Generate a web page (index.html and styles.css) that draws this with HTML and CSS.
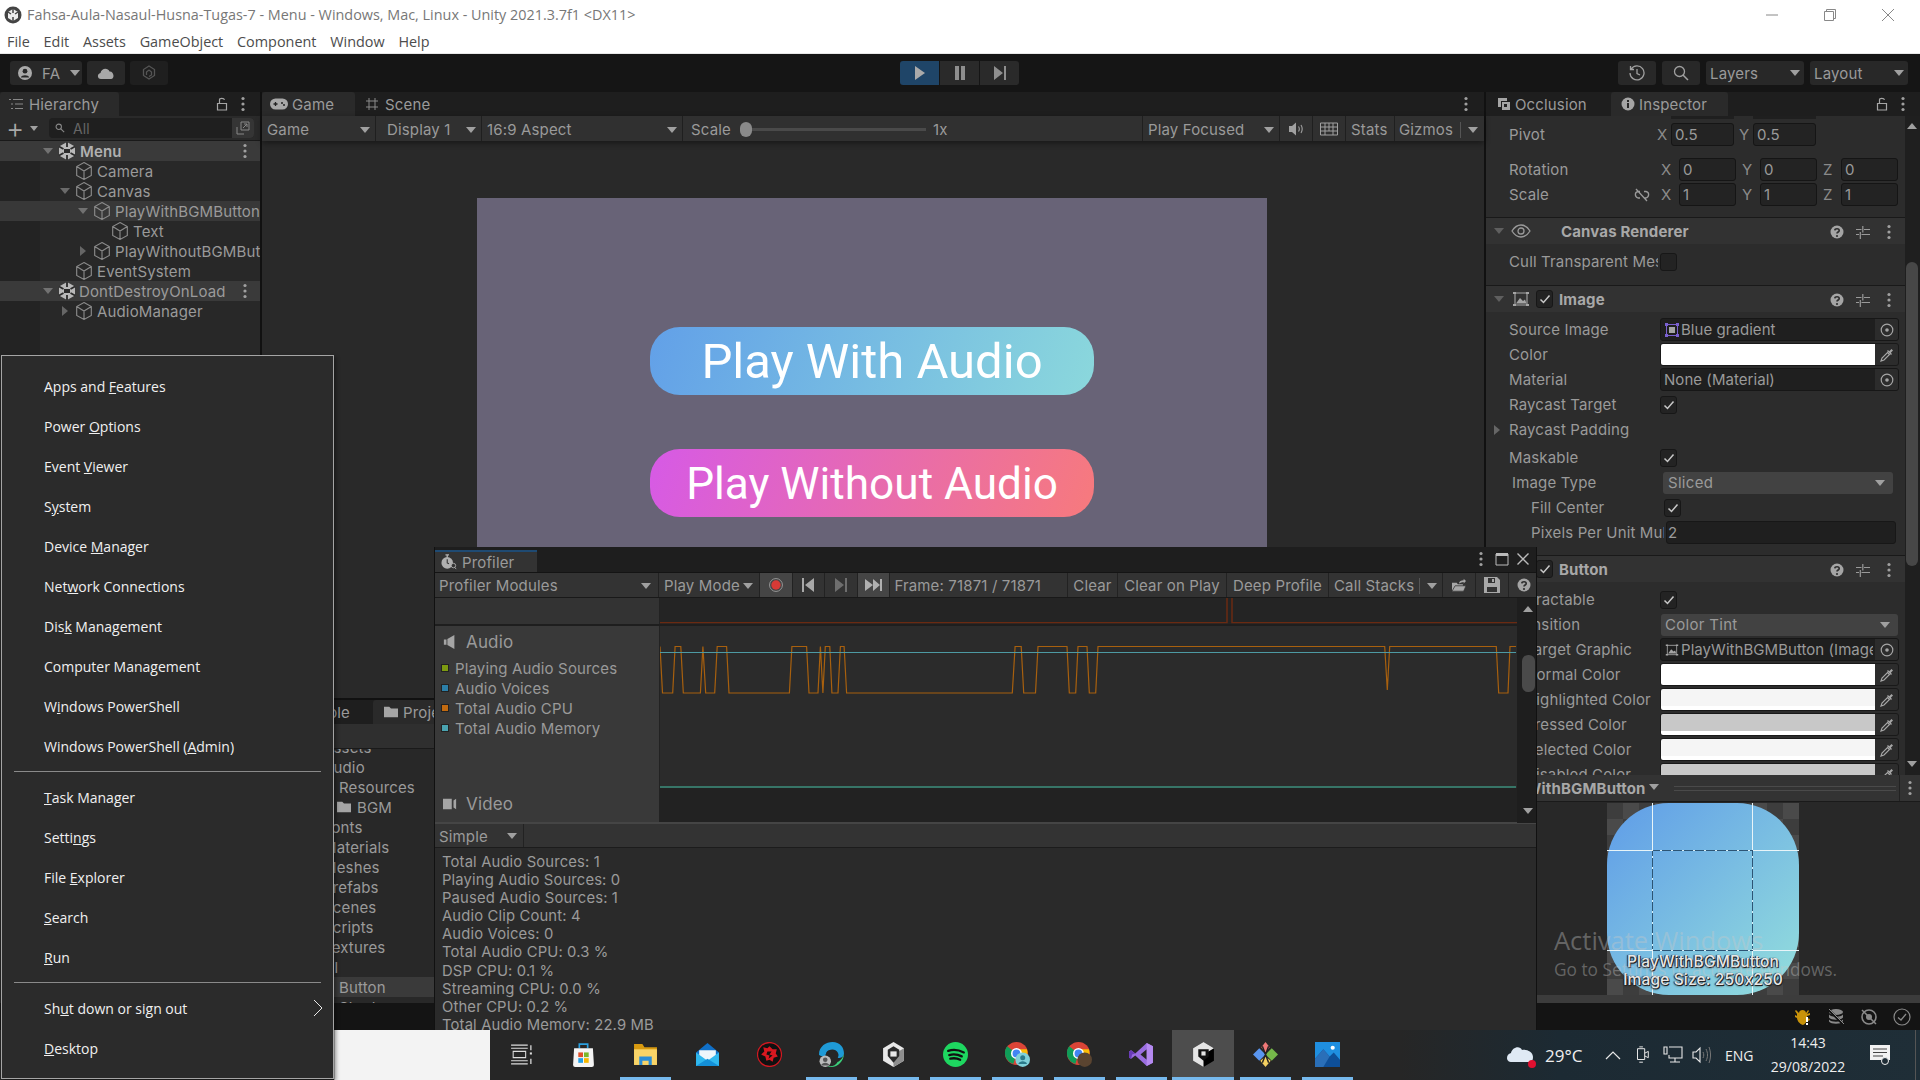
FILE: index.html
```html
<!DOCTYPE html>
<html lang="en">
<head>
<meta charset="utf-8">
<title>Unity</title>
<link rel="stylesheet" href="styles.css">
</head>
<body>
<svg class="defs" aria-hidden="true">
  <symbol id="cube" viewBox="1.500 1 15 16"><path d="M9 1.500 15.500 5v8L9 16.500 2.500 13V5ZM2.500 5 9 9l6.500-4M9 9v7.500" fill="none" stroke="#8a8a8a" stroke-width="1"/></symbol>
  <symbol id="scene" viewBox="0 0 18 18"><path d="M9 0 17 4.500v9L9 18 1 13.500v-9Z" fill="#b8b8b8"/><path d="M9 0v5M1 4.500 5.500 7M17 4.500 12.500 7M9 18v-5M1 13.500 5.500 11M17 13.500 12.500 11" stroke="#2a2a2a" stroke-width="1.800"/><path d="M6 7h6v4H6Z" fill="#2a2a2a"/></symbol>
  <symbol id="kebab" viewBox="0 0 6 16"><circle cx="3" cy="2.500" r="1.600" fill="#a0a0a0"/><circle cx="3" cy="8" r="1.600" fill="#a0a0a0"/><circle cx="3" cy="13.500" r="1.600" fill="#a0a0a0"/></symbol>
  <symbol id="lock" viewBox="0 0 12 16"><path d="M1.500 7.500h9v6.500h-9ZM3.500 7V3.800C3.500 2 8 2 8.500 3.800" fill="none" stroke="#a5a5a5" stroke-width="1.200"/></symbol>
  <symbol id="help" viewBox="0 0 14 14"><circle cx="7" cy="7" r="6.500" fill="#a5a5a5"/><path d="M4.800 5.300C5 3.200 9.200 3.200 9.200 5.400 9.200 7 7 6.900 7 8.600" fill="none" stroke="#2f2f2f" stroke-width="1.700"/><circle cx="7" cy="11" r="1.100" fill="#2f2f2f"/></symbol>
  <symbol id="preset" viewBox="0 0 14 14"><path d="M0 4.500h5.500M8 4.500h6M0 9.500h3M5.500 9.500h8.500M6.800 1v6.500M4.300 7v7M4.300 11.500h0" fill="none" stroke="#9a9a9a" stroke-width="1.200"/></symbol>
  <symbol id="check" viewBox="0 0 12 12"><path d="M1.500 6.500 4.500 9.500 10.500 2.500" fill="none" stroke="#c8c8c8" stroke-width="1.500"/></symbol>
  <symbol id="target" viewBox="0 0 14 14"><circle cx="7" cy="7" r="5.800" fill="none" stroke="#a5a5a5" stroke-width="1.200"/><circle cx="7" cy="7" r="1.800" fill="#a5a5a5"/></symbol>
  <symbol id="picker" viewBox="0 0 14 14"><path d="M1 13 2 10 7.500 4.500 9.500 6.500 4 12Z" fill="none" stroke="#a5a5a5" stroke-width="1.200"/><path d="M7 3 11 7 12 6 10.800 4.800 13 2.500 11.500 1 9.200 3.200 8 2Z" fill="#a5a5a5"/></symbol>
  <symbol id="imgico" viewBox="0 0 18 16"><path d="M3 2h12v12H3Z" fill="none" stroke="#a5a5a5" stroke-width="1.100"/><path d="M4 12.500 8 7 11 10 13 8.500 14.500 12.500Z" fill="#a5a5a5"/><path d="M1 1h3v2H1ZM14 1h3v2h-3ZM1 13h3v2H1ZM14 13h3v2h-3Z" fill="#a5a5a5"/></symbol>
  <symbol id="folder" viewBox="0 0 16 14"><path d="M0 1h6l2 2h8v10H0Z" fill="#a5a5a5"/></symbol>
</svg>

<header class="titlebar">
  <svg class="app-ico" viewBox="0 0 18 18"><circle cx="9" cy="9" r="8.500" fill="#444"/><path d="M9 3 14 6v6l-5 3-5-3V6Z" fill="#eee"/><path d="M9 3v4M4 6l3 2M14 6l-3 2M9 15v-4" stroke="#444" stroke-width="1.500"/></svg>
  <span class="title-text">Fahsa-Aula-Nasaul-Husna-Tugas-7 - Menu - Windows, Mac, Linux - Unity 2021.3.7f1 &lt;DX11&gt;</span>
  <div class="winctl">
    <svg viewBox="0 0 14 14"><path d="M1 7h12" stroke="#888" stroke-width="1"/></svg>
    <svg viewBox="0 0 14 14"><path d="M1.500 3.500h9v9h-9ZM3.500 3.500V1.500h9v9h-2" fill="none" stroke="#888" stroke-width="1"/></svg>
    <svg viewBox="0 0 14 14"><path d="M1 1 13 13M13 1 1 13" stroke="#888" stroke-width="1"/></svg>
  </div>
</header>
<nav class="menubar"><span>File</span><span>Edit</span><span>Assets</span><span>GameObject</span><span>Component</span><span>Window</span><span>Help</span></nav>

<section class="toolbar">
  <div class="tb-left">
    <div class="tbtn acct"><svg class="i14" viewBox="0 0 14 14"><circle cx="7" cy="7" r="7" fill="#aaa"/><circle cx="7" cy="5.200" r="2.400" fill="#282828"/><path d="M2.800 11.500C3.500 8.500 10.500 8.500 11.200 11.500Z" fill="#282828"/></svg><span>FA</span><i class="tri-d"></i></div>
    <div class="tbtn cloud"><svg class="i18" viewBox="0 0 18 14"><path d="M4 13C0 13 0 7.500 3.500 7 4 2 11 1 12.500 5.500 17 5 18 13 14 13Z" fill="#a8a8a8"/></svg></div>
    <div class="tbtn collab"><svg class="i16" viewBox="0 0 14 16"><path d="M7 1 12.500 4.500v6L7 14 1.500 10.500v-6Z" fill="none" stroke="#555" stroke-width="1.300"/><path d="M7 5 9.500 7v3L7 11.500M7 5 4.500 7v3" fill="none" stroke="#555" stroke-width="1.300"/></svg></div>
  </div>
  <div class="tb-play">
    <div class="pbtn on"><svg class="i14" viewBox="0 0 14 14"><path d="M2 0 12 7 2 14Z" fill="#aaa"/></svg></div>
    <div class="pbtn"><svg class="i14" viewBox="0 0 14 14"><path d="M2 0h4v14H2ZM8 0h4v14H8Z" fill="#8e8e8e"/></svg></div>
    <div class="pbtn"><svg class="i14" viewBox="0 0 14 14"><path d="M1 0 10 7 1 14Z M11 0h2v14h-2Z" fill="#8e8e8e"/></svg></div>
  </div>
  <div class="tb-right">
    <div class="tbtn sq"><svg class="i16" viewBox="0 0 16 16"><path d="M2.200 4A7 7 0 1 1 1 8M1.500 1v3.500H5M8 4v4.500l3 1.500" fill="none" stroke="#a0a0a0" stroke-width="1.300"/></svg></div>
    <div class="tbtn sq"><svg class="i16" viewBox="0 0 16 16"><circle cx="6.500" cy="6.500" r="5" fill="none" stroke="#a0a0a0" stroke-width="1.300"/><path d="M10 10 15 15" stroke="#a0a0a0" stroke-width="1.500"/></svg></div>
    <div class="tbtn dd"><span>Layers</span><i class="tri-d"></i></div>
    <div class="tbtn dd"><span>Layout</span><i class="tri-d"></i></div>
  </div>
</section>

<main class="dock">
  <aside class="hierarchy">
    <div class="tabbar">
      <div class="tab hier-tab"><svg class="i14" viewBox="0 0 14 12"><path d="M0 1.500h2M4 1.500h10M2 6h2M6 6h8M2 10.500h2M6 10.500h8" stroke="#888" stroke-width="1.100"/></svg><span>Hierarchy</span></div>
      <div class="tab-end"><svg class="ic-lock"><use href="#lock"/></svg><svg class="ic-keb"><use href="#kebab"/></svg></div>
    </div>
    <div class="hier-tools">
      <span class="plus">+</span><i class="tri-d small"></i>
      <div class="search"><svg class="i10" viewBox="0 0 12 12"><circle cx="4.500" cy="4.500" r="3.200" fill="none" stroke="#888" stroke-width="1.300"/><path d="M7 7 11 11" stroke="#888" stroke-width="1.300"/></svg><span>All</span><b class="search-end"><svg class="i14" viewBox="0 0 14 14"><path d="M1 6v7h7M5 1h8v8H5ZM7 7l4-4M8 3h3v3" fill="none" stroke="#888" stroke-width="1"/></svg></b></div>
    </div>
    <div class="hrow band l0"><i class="tri-d tw"></i><svg class="cube"><use href="#scene"/></svg><span class="strong">Menu</span><svg class="ic-keb end"><use href="#kebab"/></svg></div>
    <div class="hrow l1"><i class="tw"></i><svg class="cube"><use href="#cube"/></svg><span>Camera</span></div>
    <div class="hrow l1"><i class="tri-d tw"></i><svg class="cube"><use href="#cube"/></svg><span>Canvas</span></div>
    <div class="hrow sel l2"><i class="tri-d tw"></i><svg class="cube"><use href="#cube"/></svg><span>PlayWithBGMButton</span></div>
    <div class="hrow l3"><i class="tw"></i><svg class="cube"><use href="#cube"/></svg><span>Text</span></div>
    <div class="hrow l2"><i class="tri-r tw"></i><svg class="cube"><use href="#cube"/></svg><span>PlayWithoutBGMButton</span></div>
    <div class="hrow l1"><i class="tw"></i><svg class="cube"><use href="#cube"/></svg><span>EventSystem</span></div>
    <div class="hrow band l0"><i class="tri-d tw"></i><svg class="cube"><use href="#scene"/></svg><span class="tight">DontDestroyOnLoad</span><svg class="ic-keb end"><use href="#kebab"/></svg></div>
    <div class="hrow l1"><i class="tri-r tw"></i><svg class="cube"><use href="#cube"/></svg><span>AudioManager</span></div>
    <div class="hrow-fill"></div>
  </aside>

  <div class="center">
    <section class="game">
      <div class="tabbar">
        <div class="tab game-tab"><svg class="i18" viewBox="0 0 18 12"><rect x="0" y="0.500" width="18" height="11" rx="5.500" fill="#a8a8a8"/><path d="M3.500 6h4M5.500 4v4" stroke="#222" stroke-width="1.300"/><circle cx="12" cy="5" r="1" fill="#222"/><circle cx="14" cy="7" r="1" fill="#222"/></svg><span>Game</span></div>
        <div class="tab plain scene-tab"><svg class="i14" viewBox="0 0 14 14"><path d="M4 1v12M10 1v12M1 4h12M1 10h12" stroke="#8a8a8a" stroke-width="1"/></svg><span>Scene</span></div>
        <div class="tab-end game-end"><svg class="ic-keb"><use href="#kebab"/></svg></div>
      </div>
      <div class="game-tools">
        <div class="gt w-game"><span>Game</span><i class="tri-d"></i></div>
        <div class="gt w-disp"><span>Display 1</span><i class="tri-d"></i></div>
        <div class="gt w-asp"><span>16:9 Aspect</span><i class="tri-d"></i></div>
        <div class="gt w-scale"><span>Scale</span><div class="slider"><b></b></div><span class="onex">1x</span></div>
        <div class="gt w-focus"><span>Play Focused</span><i class="tri-d"></i></div>
        <div class="gt w-ico"><svg class="i16" viewBox="0 0 16 14"><path d="M1 4h3l4-3.500v13L4 10H1Z" fill="#a0a0a0"/><path d="M10.500 4.500c1 1.500 1 3.500 0 5M13 3c1.500 2.500 1.500 5.500 0 8" fill="none" stroke="#a0a0a0" stroke-width="1.100"/></svg></div>
        <div class="gt w-ico"><svg class="i18" viewBox="0 0 18 14"><path d="M.5 1h17v12H.5ZM.5 5h17M.5 9h17M5 1v12M9 1v8M13 1v12" fill="none" stroke="#a0a0a0" stroke-width="1"/></svg></div>
        <div class="gt w-stats"><span>Stats</span></div>
        <div class="gt w-giz"><span>Gizmos</span><u></u><i class="tri-d"></i></div>
      </div>
      <div class="viewport">
        <div class="canvas">
          <div class="uibtn blue">Play With Audio</div>
          <div class="uibtn pink">Play Without Audio</div>
        </div>
      </div>
    </section>
    <section class="project">
      <div class="tabbar low">
        <div class="tab plain con-tab"><span>Console</span></div>
        <div class="tab proj-tab"><svg class="i14"><use href="#folder"/></svg><span>Project</span></div>
      </div>
      <div class="proj-tools"></div>
      <div class="tree">
        <div class="trow t0 peek">Assets</div>
        <div class="trow t0">Audio</div>
        <div class="trow t1">Resources</div>
        <div class="trow t2"><svg class="i14"><use href="#folder"/></svg>BGM</div>
        <div class="trow t0">Fonts</div>
        <div class="trow t0">Materials</div>
        <div class="trow t0">Meshes</div>
        <div class="trow t0">Prefabs</div>
        <div class="trow t0">Scenes</div>
        <div class="trow t0">Scripts</div>
        <div class="trow t0">Textures</div>
        <div class="trow t0">UI</div>
        <div class="trow t1 picked">Button</div>
        <div class="trow t1">Shader</div>
      </div>
    </section>
  </div>

  <aside class="inspector">
    <div class="tabbar">
      <div class="tab plain occ-tab"><svg class="i14" viewBox="0 0 14 14"><path d="M1 1h9v3H4v6H1ZM5 5h8v8H5Z" fill="#a5a5a5"/><path d="M7 7h3v3H7Z" fill="#222"/></svg><span>Occlusion</span></div>
      <div class="tab insp-tab"><svg class="i14" viewBox="0 0 14 14"><circle cx="7" cy="7" r="6.500" fill="#a5a5a5"/><path d="M6 6h2v5H6ZM6 3h2v2H6Z" fill="#282828"/></svg><span>Inspector</span></div>
      <div class="tab-end"><svg class="ic-lock"><use href="#lock"/></svg><svg class="ic-keb"><use href="#kebab"/></svg></div>
    </div>
    <div class="insp-main">
      <div class="insp-scroll">
        <div class="peek-row"><b></b><b></b></div>
        <div class="row m3"><label>Pivot</label><div class="vec two"><div class="axis"><span>X</span><b>0.5</b></div><div class="axis"><span>Y</span><b>0.5</b></div></div></div>
        <div class="row m10"><label>Rotation</label><div class="vec three"><div class="axis"><span>X</span><b>0</b></div><div class="axis"><span>Y</span><b>0</b></div><div class="axis"><span>Z</span><b>0</b></div></div></div>
        <div class="row"><label>Scale</label><svg class="link" viewBox="0 0 16 14"><path d="M6 3.500 4 3.500C.5 4 .5 9 4 10h2M10 3.500h2c3.500.500 3.500 5.500 0 6.500h-2M2 1l11 12" fill="none" stroke="#9a9a9a" stroke-width="1.300"/></svg><div class="vec three"><div class="axis"><span>X</span><b>1</b></div><div class="axis"><span>Y</span><b>1</b></div><div class="axis"><span>Z</span><b>1</b></div></div></div>

        <div class="chead m10"><i class="tri-d dim"></i><svg class="chico" viewBox="0 0 20 14"><path d="M1 7C6 -1 14 -1 19 7 14 15 6 15 1 7Z" fill="none" stroke="#9a9a9a" stroke-width="1.300"/><circle cx="10" cy="7" r="3" fill="none" stroke="#9a9a9a" stroke-width="1.300"/></svg><span class="ctitle nocheck">Canvas Renderer</span><div class="cacts"><svg><use href="#help"/></svg><svg><use href="#preset"/></svg><svg class="k"><use href="#kebab"/></svg></div></div>
        <div class="row m5"><label class="shortlab">Cull Transparent Mesh</label><i class="cb"></i></div>

        <div class="chead m11"><i class="tri-d dim"></i><svg class="chico"><use href="#imgico"/></svg><i class="cb on hd"><svg><use href="#check"/></svg></i><span class="ctitle">Image</span><div class="cacts"><svg><use href="#help"/></svg><svg><use href="#preset"/></svg><svg class="k"><use href="#kebab"/></svg></div></div>
        <div class="row m5"><label>Source Image</label><div class="objf"><svg class="sprite" viewBox="0 0 14 14"><path d="M1.500 1.500h11v11h-11Z" fill="none" stroke="#7a60d0"/><path d="M0 0h3v3H0ZM11 0h3v3h-3ZM0 11h3v3H0ZM11 11h3v3h-3Z" fill="#7a60d0"/><path d="M4 4h6v6H4Z" fill="#a5a5a5"/></svg><span>Blue gradient</span><b><svg><use href="#target"/></svg></b></div></div>
        <div class="row"><label>Color</label><div class="colf"><em class="c-white"></em><b><svg><use href="#picker"/></svg></b></div></div>
        <div class="row"><label>Material</label><div class="objf"><span>None (Material)</span><b><svg><use href="#target"/></svg></b></div></div>
        <div class="row"><label>Raycast Target</label><i class="cb on"><svg><use href="#check"/></svg></i></div>
        <div class="row"><i class="tri-r foldout"></i><label>Raycast Padding</label></div>
        <div class="row m3"><label>Maskable</label><i class="cb on"><svg><use href="#check"/></svg></i></div>
        <div class="row"><label class="ind1">Image Type</label><div class="ddf narrow"><span>Sliced</span><i class="tri-d"></i></div></div>
        <div class="row"><label class="ind2">Fill Center</label><i class="cb on shifted"><svg><use href="#check"/></svg></i></div>
        <div class="row"><label class="ind2 shortlab">Pixels Per Unit Multiplier</label><div class="numf"><span>2</span></div></div>

        <div class="chead m10"><i class="tri-d dim"></i><svg class="chico"><use href="#imgico"/></svg><i class="cb on hd"><svg><use href="#check"/></svg></i><span class="ctitle">Button</span><div class="cacts"><svg><use href="#help"/></svg><svg><use href="#preset"/></svg><svg class="k"><use href="#kebab"/></svg></div></div>
        <div class="row m5"><label>Interactable</label><i class="cb on"><svg><use href="#check"/></svg></i></div>
        <div class="row"><label>Transition</label><div class="ddf"><span>Color Tint</span><i class="tri-d"></i></div></div>
        <div class="row"><label class="ind3">Target Graphic</label><div class="objf"><svg class="sprite"><use href="#imgico"/></svg><span class="nowrap">PlayWithBGMButton (Image)</span><b><svg><use href="#target"/></svg></b></div></div>
        <div class="row"><label class="ind3">Normal Color</label><div class="colf"><em class="c-white"></em><b><svg><use href="#picker"/></svg></b></div></div>
        <div class="row"><label class="ind3">Highlighted Color</label><div class="colf"><em class="c-hi"></em><b><svg><use href="#picker"/></svg></b></div></div>
        <div class="row"><label class="ind3">Pressed Color</label><div class="colf"><em class="c-pr"></em><b><svg><use href="#picker"/></svg></b></div></div>
        <div class="row"><label class="ind3">Selected Color</label><div class="colf"><em class="c-hi"></em><b><svg><use href="#picker"/></svg></b></div></div>
        <div class="row"><label class="ind3">Disabled Color</label><div class="colf"><em class="c-pr"></em><b><svg><use href="#picker"/></svg></b></div></div>
      </div>
      <div class="vscroll">
        <i class="tri-u"></i><div class="thumb"></div><i class="tri-d"></i>
      </div>
    </div>
    <div class="prev-head"><span class="prev-name">PlayWithBGMButton</span><i class="tri-d"></i><div class="grip"></div><div class="prev-keb"><svg class="ic-keb"><use href="#kebab"/></svg></div></div>
    <div class="prev-body">
      <div class="checker">
        <div class="sprite-img"></div>
        <i class="g gv g1"></i><i class="g gv g2"></i><i class="g gh g3"></i><i class="g gh g4"></i>
        <div class="prev-cap"><div>PlayWithBGMButton</div><div>Image Size: 250x250</div></div>
      </div>
    </div>
    <div class="prev-foot"></div>
  </aside>
</main>

<footer class="status">
  <svg viewBox="0 0 18 18"><path d="M5 5c0-4 7-4 7 0l2-3 1 1-2 3 3-1v2l-3 1v2l3 1-1 2-2-1c-1 3-2 4-4 5-4-1-6-5-6-7L1 9V7l2 1V6L1 3l1-1Z" fill="#c8920a"/><path d="M12 9h2v5h-2ZM12 15h2v2h-2Z" fill="#fff"/></svg>
  <svg viewBox="0 0 18 18"><ellipse cx="9" cy="4" rx="7" ry="3" fill="#8a8a8a"/><path d="M2 6.500c2 3 12 3 14 0v3c-2 3-12 3-14 0ZM2 11.500c2 3 12 3 14 0v2c-2 3-12 3-14 0Z" fill="#8a8a8a"/><path d="M1 1 17 17" stroke="#141414" stroke-width="2.500"/><path d="M2 1 17 16" stroke="#8a8a8a" stroke-width="1"/></svg>
  <svg viewBox="0 0 18 18"><circle cx="9" cy="9" r="7" fill="none" stroke="#8a8a8a" stroke-width="1.600"/><circle cx="9" cy="9" r="3" fill="#8a8a8a"/><path d="M2 2 16 16" stroke="#8a8a8a" stroke-width="1.500"/></svg>
  <svg viewBox="0 0 18 18"><circle cx="9" cy="9" r="8" fill="none" stroke="#8a8a8a" stroke-width="1.200"/><path d="M5 9.500 8 12 13 6" fill="none" stroke="#8a8a8a" stroke-width="1.300"/></svg>
</footer>

<section class="taskbar">
  <div class="tb-blank"></div>
  <div class="tb-search"></div>
  <div class="tk"><svg viewBox="0 0 24 24"><path d="M2 3h16M2 6h16M2 18h16M2 21h16M4 9h12v6H4Z" fill="none" stroke="#ddd" stroke-width="1"/><path d="M21 3v5M21 16v5" stroke="#ddd" stroke-width="1.200"/><path d="M20 10h2v2h-2Z" fill="#ddd"/></svg></div>
  <div class="tk"><svg viewBox="0 0 24 24"><path d="M8 6V2h8v4" fill="none" stroke="#2aa0e0" stroke-width="1.600"/><path d="M3 6h18l1 16a2 2 0 0 1-2 2H4a2 2 0 0 1-2-2Z" fill="#f4f4f4"/><path d="M7 10h4.500v4.500H7Z" fill="#e0502a"/><path d="M12.500 10H17v4.500h-4.500Z" fill="#7cb82a"/><path d="M7 15.500h4.500V20H7Z" fill="#22a0e8"/><path d="M12.500 15.500H17V20h-4.500Z" fill="#f8b800"/></svg></div>
  <div class="tk on"><svg viewBox="0 0 24 24"><path d="M1 2h8l2 3h12v17H1Z" fill="#d89a10"/><path d="M1 7h22v15H1Z" fill="#f8d468"/><path d="M6 14h12v8h-3v-4H9v4H6Z" fill="#2a8ed8"/></svg></div>
  <div class="tk"><svg viewBox="0 0 24 24"><path d="M12 1 23 10v13H1V10Z" fill="#1070c8"/><path d="M4 8h16v6l-8 5-8-5Z" fill="#eef6fb"/><path d="M1 10 12 18 23 10v13H1Z" fill="#30b8ee"/><path d="M1 23 12 16l11 7Z" fill="#1490d8"/></svg></div>
  <div class="tk"><svg viewBox="0 0 24 24"><circle cx="12" cy="12" r="11.500" fill="#111" stroke="#d01820" stroke-width="1.200"/><path d="M12 4 15 7l4 0-1 4 2 3-4 1-1 4-3-2-3 1-1-4-4-2 3-3-1-4 4 1Z" fill="#d81820"/><path d="M10 9h4l-2 3 3 1-4 3 1-3-3-1Z" fill="#111"/></svg></div>
  <div class="tk on"><svg viewBox="0 0 24 24"><path d="M0 12C0 4 7 0 13 0c7 0 11 5 11 11 0 3-3 5-6 4 1-2 1-3 0-5-2-4-9-4-11 1-1 1-1 2-1 3-3 0-6-1-6-2Z" fill="#1f9ad6"/><path d="M24 11c0 7-6 13-12 13-2 0-3 0-4-1 4 1 8 0 10-4 1 0 5-3 6-8Z" fill="#3bcf7a"/><path d="M7 10c2-3 7-3 9 0 1 3-1 6-4 6-3 1-6-2-5-6Z" fill="#262626"/><circle cx="6" cy="18.500" r="5.500" fill="#bbb"/><circle cx="6" cy="17" r="2.200" fill="#555"/><path d="M2 22.500c1-3.500 7-3.500 8 0Z" fill="#555"/></svg></div>
  <div class="tk on"><svg viewBox="0 0 24 24"><path d="M12 0 22 6v12l-10 6L2 18V6Z" fill="#e8e8e8"/><path d="M12 12 22 6v12l-10 6Z" fill="#8e8e8e"/><path d="M12 4 17.500 7.500v6L12 20l-5.500-6.500v-6Z" fill="#2a2a2a"/><path d="M9 9h6v5H9Z" fill="#e8e8e8"/></svg></div>
  <div class="tk on"><svg viewBox="0 0 24 24"><circle cx="12" cy="12" r="12" fill="#1ed760"/><path d="M5 8.500c5-1.500 10-1 15 1.500M6 12.500c4-1 8-.700 12 1.300M7 16c3-.700 6.500-.500 9.500 1" fill="none" stroke="#111" stroke-width="2.200" stroke-linecap="round"/></svg></div>
  <div class="tk on"><svg viewBox="0 0 24 24"><circle cx="11" cy="11" r="11" fill="#db4437"/><path d="M11 11 2 4a11 11 0 0 0 6 17Z" fill="#0f9d58"/><path d="M11 7h10a11 11 0 0 1-1 9l-6 6Z" fill="#fbbc05"/><circle cx="11" cy="11" r="4.500" fill="#4285f4" stroke="#fff" stroke-width="1.500"/><circle cx="17" cy="17" r="7" fill="#7fd0d8"/><circle cx="17" cy="15" r="2.400" fill="#2a7a8a"/><path d="M12.800 21c1-3.500 7.400-3.500 8.400 0Z" fill="#2a7a8a"/></svg></div>
  <div class="tk on"><svg viewBox="0 0 24 24"><circle cx="11" cy="11" r="11" fill="#db4437"/><path d="M11 11 2 4a11 11 0 0 0 6 17Z" fill="#0f9d58"/><path d="M11 7h10a11 11 0 0 1-1 9l-6 6Z" fill="#fbbc05"/><circle cx="11" cy="11" r="4.500" fill="#4285f4" stroke="#fff" stroke-width="1.500"/><circle cx="17" cy="17" r="7" fill="#5a4430"/></svg></div>
  <div class="tk on"><svg viewBox="0 0 24 24"><path d="M17 1 23 4v16l-6 3L6 13 2 16 0 15V9l2-1 4 3ZM17 7l-6 5 6 5Z" fill="#9a6ee0"/><path d="M17 1 23 4v16l-6 3Z" fill="#b58af0"/><path d="M0 9 2 8 6 11 3 12 2 16 0 15Z" fill="#6a3cb8"/></svg></div>
  <div class="tk on act"><svg viewBox="0 0 24 24"><path d="M12 0 22 6v12l-10 6L2 18V6Z" fill="#000"/><path d="M12 0 2 6v12l10 6V12l10-6Z" fill="#e4e4e4"/><path d="M7 7h10v7l-5 4-5-4Z" fill="#111"/><path d="M10 9h4v4h-4Z" fill="#e4e4e4"/></svg></div>
  <div class="tk on"><svg viewBox="0 0 24 24"><path d="M6 6 12 12 6 18 0 12Z" fill="#5a96f0"/><path d="M18 6 24 12 18 18 12 12Z" fill="#76b84a"/><path d="M12 0 16 5 12 10 8 5Z" fill="#f07878"/><path d="M12 14 17 18 12 24 7 18Z" fill="#f4d060"/><path d="M9 4 15 20M15 4 9 20" stroke="#222" stroke-width="1.400"/></svg></div>
  <div class="tk on"><svg viewBox="0 0 24 24"><path d="M0 0h24v24H0Z" fill="#1f8fe0"/><path d="M0 24V16L8 7l6 7 4-4 6 7v7Z" fill="#0e4f98"/><path d="M8 7 14 14 8 24H0V16Z" fill="#2a6fb8"/><circle cx="17" cy="5.500" r="2" fill="#fff"/></svg></div>
  <div class="tray">
    <svg class="weather" viewBox="0 0 30 26"><path d="M6 20C-1 20 0 12 5 11 6 5 14 3 16 8c5-1 11 2 11 7s-3 5-5 5Z" fill="#dfe9f4"/><circle cx="26" cy="22" r="4" fill="#e01030"/></svg>
    <span class="temp">29°C</span>
    <svg class="tray-ico chev" viewBox="0 0 16 10"><path d="M1 9 8 2l7 7" fill="none" stroke="#e8e8e8" stroke-width="1.200"/></svg>
    <svg class="tray-ico" viewBox="0 0 16 20"><path d="M3 3h8v12H3ZM5 1h4M5 18h4M11 8l4-2v7l-4-2" fill="none" stroke="#e8e8e8" stroke-width="1.100"/></svg>
    <svg class="tray-ico wide" viewBox="0 0 20 18"><path d="M6 1h13v11H6v-3M12 12v4M7 16h10M1 1h3v7H1Z" fill="none" stroke="#e8e8e8" stroke-width="1.100"/></svg>
    <svg class="tray-ico wide" viewBox="0 0 20 18"><path d="M1 6h3l4-4v14l-4-4H1Z" fill="none" stroke="#e8e8e8" stroke-width="1.100"/><path d="M11 6c1 2 1 4 0 6M14 3c2 4 2 8 0 12M17 1c2 5 2 11 0 16" fill="none" stroke="#777" stroke-width="1"/></svg>
    <span class="lang">ENG</span>
    <div class="clock"><div>14:43</div><div>29/08/2022</div></div>
    <svg class="notif" viewBox="0 0 20 20"><path d="M0 0h20v15H0Z" fill="#f2f2f2"/><path d="M3 4h14M3 7.500h14M3 11h10" stroke="#444" stroke-width="1"/><circle cx="15" cy="16" r="3.500" fill="#1e2c35" stroke="#f2f2f2" stroke-width="1"/></svg>
    <i class="show-desk"></i>
  </div>
</section>

<section class="profiler">
  <div class="p-tabs">
    <div class="p-tab"><svg class="i16" viewBox="0 0 18 18"><circle cx="7" cy="10" r="6.500" fill="#b0b0b0"/><path d="M5 1h4M7 1v3" stroke="#b0b0b0" stroke-width="1.500" fill="none"/><path d="M7 6v4l2 1" stroke="#333" stroke-width="1.200" fill="none"/><circle cx="14" cy="13" r="2.500" fill="#333" stroke="#b0b0b0"/><path d="M15.500 15 17 17" stroke="#b0b0b0"/></svg><span>Profiler</span></div>
    <div class="p-ctl">
      <svg class="ic-keb pk"><use href="#kebab"/></svg>
      <svg class="ctl" viewBox="0 0 14 14"><path d="M1 2h12v11H1Z" fill="none" stroke="#bbb"/><path d="M1 1h12v3H1Z" fill="#bbb"/></svg>
      <svg class="ctl" viewBox="0 0 14 14"><path d="M1.500 1.500 12.500 12.500M12.500 1.500 1.500 12.500" stroke="#bbb" stroke-width="1.400"/></svg>
    </div>
  </div>
  <div class="p-tools">
    <div class="pt w-mod"><span>Profiler Modules</span><i class="tri-d"></i></div>
    <div class="pt w-mode"><span>Play Mode</span><i class="tri-d"></i></div>
    <div class="pt w-sq lit"><svg class="i18" viewBox="0 0 18 18"><circle cx="9" cy="9" r="8.300" fill="none" stroke="#aaa"/><circle cx="9" cy="9" r="6" fill="#d83a36"/></svg></div>
    <div class="pt w-sq"><svg class="i14" viewBox="0 0 14 14"><path d="M1 0h2v14H1ZM13 0v14L4 7Z" fill="#a8a8a8"/></svg></div>
    <div class="pt w-sq"><svg class="i14" viewBox="0 0 14 14"><path d="M1 0v14l9-7ZM11 0h2v14h-2Z" fill="#6e6e6e"/></svg></div>
    <div class="pt w-sq lit"><svg class="i18" viewBox="0 0 18 14"><path d="M0 1v12l8-6ZM8 1v12l7-6ZM15 1h2v12h-2Z" fill="#b0b0b0"/></svg></div>
    <div class="frame">Frame: 71871 / 71871</div>
    <div class="pt w-clear"><span>Clear</span></div>
    <div class="pt w-cop"><span>Clear on Play</span></div>
    <div class="pt w-deep"><span>Deep Profile</span></div>
    <div class="pt w-stack"><span>Call Stacks</span><u></u><i class="tri-d"></i></div>
    <div class="pt w-sq"><svg class="i18" viewBox="0 0 20 18"><path d="M1 6h6l1.500 2H15v9H1Z" fill="#a8a8a8"/><path d="M1 17 5 10h14l-3 7Z" fill="#a8a8a8" stroke="#333"/><path d="M10 7c0-3 3-4 6-4V1l3 3-3 3V5c-2 0-4 1-6 2Z" fill="#a8a8a8"/></svg></div>
    <div class="pt w-sq"><svg class="i16" viewBox="0 0 16 16"><path d="M0 0h13l3 3v13H0Z" fill="#a8a8a8"/><path d="M4 1h7v5H4ZM3 10h10v5H3Z" fill="#333"/><path d="M8 2h2v3H8Z" fill="#a8a8a8"/></svg></div>
    <div class="pt w-sq"><svg class="i14"><use href="#help"/></svg></div>
  </div>
  <div class="p-body">
    <div class="p-main">
      <div class="mod mod-top">
        <div class="mod-left"></div>
        <div class="mod-chart">
          <svg class="plot" viewBox="661 598 857 28" preserveAspectRatio="none"><path d="M661 624.500H1228V598M1233 598V624.500H1518" fill="none" stroke="#6a2a12" stroke-width="1.500"/></svg>
        </div>
      </div>
      <div class="mod mod-audio">
        <div class="mod-left">
          <div class="mod-title"><svg class="i14" viewBox="0 0 14 16"><path d="M0 5h3v6H0ZM4 4.500 12 0v16L4 11.500Z" fill="#a5a5a5"/></svg><span>Audio</span></div>
          <div class="legend"><i class="sw s1"></i><span>Playing Audio Sources</span></div>
          <div class="legend"><i class="sw s2"></i><span>Audio Voices</span></div>
          <div class="legend"><i class="sw s3"></i><span>Total Audio CPU</span></div>
          <div class="legend"><i class="sw s4"></i><span>Total Audio Memory</span></div>
        </div>
        <div class="mod-chart">
          <svg class="plot" viewBox="661 626 857 162" preserveAspectRatio="none">
            <path d="M661 646.500 663.500 693H673.700L676.100 646.500H681.800L684.300 693H701.400L703.900 646.500 706.700 693H715.700L718.200 646.500H727.600L730 693H790.400L792.900 646.500H807.600L810 693H819L821.400 646.500 823.900 693 826.300 646.500H830.800L832.900 693H839L841.400 646.500H845.100L847.600 693H1013.300L1016.100 646.500H1022.200L1024.700 693H1036.500L1039 646.500H1068L1070.300 693H1076.700L1079 646.500H1088L1090.300 693H1096.700L1099 646.500H1385.700L1388.300 690 1390.700 646.500H1497.300L1499.700 693H1509L1511 646.500H1517" fill="none" stroke="#a8600e" stroke-width="1.200"/>
            <path d="M661 652.500H1517" stroke="#4d9aa3" stroke-width="1.200"/>
            <path d="M661 787H1517" stroke="#3d8f7c" stroke-width="1.500"/>
          </svg>
        </div>
      </div>
      <div class="mod mod-video">
        <div class="mod-left"><div class="mod-title"><svg class="i14" viewBox="0 0 16 14"><path d="M0 1h10v12H0ZM12 3l3-2v12l-3-2Z" fill="#a5a5a5"/></svg><span>Video</span></div></div>
        <div class="mod-chart"></div>
      </div>
    </div>
    <div class="p-scroll"><i class="tri-u"></i><div class="thumb"></div><i class="tri-d"></i></div>
  </div>
  <div class="p-simple"><div class="pt w-simple"><span>Simple</span><i class="tri-d"></i></div></div>
  <div class="p-stats">
    <div>Total Audio Sources: 1</div>
    <div>Playing Audio Sources: 0</div>
    <div>Paused Audio Sources: 1</div>
    <div>Audio Clip Count: 4</div>
    <div>Audio Voices: 0</div>
    <div>Total Audio CPU: 0.3 %</div>
    <div>DSP CPU: 0.1 %</div>
    <div>Streaming CPU: 0.0 %</div>
    <div>Other CPU: 0.2 %</div>
    <div>Total Audio Memory: 22.9 MB</div>
  </div>
</section>

<div class="activate"><div class="a1">Activate Windows</div><div class="a2">Go to Settings to activate Windows.</div></div>

<section class="ctxmenu">
  <a><span>Apps and <u>F</u>eatures</span></a>
  <a><span>Power <u>O</u>ptions</span></a>
  <a><span>Event <u>V</u>iewer</span></a>
  <a><span>S<u>y</u>stem</span></a>
  <a><span>Device <u>M</u>anager</span></a>
  <a><span>Net<u>w</u>ork Connections</span></a>
  <a><span>Dis<u>k</u> Management</span></a>
  <a><span>Computer Mana<u>g</u>ement</span></a>
  <a><span>W<u>i</u>ndows PowerShell</span></a>
  <a><span>Windows PowerShell (<u>A</u>dmin)</span></a>
  <hr>
  <a><span><u>T</u>ask Manager</span></a>
  <a><span>Setti<u>n</u>gs</span></a>
  <a><span>File <u>E</u>xplorer</span></a>
  <a><span><u>S</u>earch</span></a>
  <a><span><u>R</u>un</span></a>
  <hr>
  <a><span>Sh<u>u</u>t down or sign out</span><svg viewBox="0 0 10 18"><path d="M1 1 9 9 1 17" fill="none" stroke="#e8e8e8" stroke-width="1"/></svg></a>
  <a><span><u>D</u>esktop</span></a>
</section>
</body>
</html>
```

FILE: styles.css
```css
* { box-sizing: border-box; }
html, body { margin: 0; padding: 0; }
body {
  position: relative;
  width: 1920px;
  height: 1080px;
  overflow: hidden;
  background: #1b1b1b;
  font-family: "Inter", "Liberation Sans", sans-serif;
  font-size: 15px;
  letter-spacing: .15px;
  color: #9a9a9a;
  display: flex;
  flex-direction: column;
}
.defs { position: absolute; width: 0; height: 0; }
i, b, em, u { font-style: normal; font-weight: normal; }
.i10 { width: 10px; height: 10px; flex: none; }
.i14 { width: 14px; height: 14px; flex: none; }
.i16 { width: 16px; height: 16px; flex: none; }
.i18 { width: 18px; height: 14px; flex: none; }

.tri-d, .tri-r, .tri-u { display: block; width: 0; height: 0; flex: none; }
.tri-d { border-left: 5px solid transparent; border-right: 5px solid transparent; border-top: 6px solid #a0a0a0; }
.tri-u { border-left: 5px solid transparent; border-right: 5px solid transparent; border-bottom: 6px solid #a0a0a0; }
.tri-r { border-top: 5px solid transparent; border-bottom: 5px solid transparent; border-left: 6px solid #666; }

/* window chrome */
.titlebar {
  height: 29px; flex: none; background: #fff; display: flex; align-items: center;
  font-family: "Open Sans", sans-serif; font-size: 14.400px; letter-spacing: 0; color: #777; padding-left: 4px;
}
.app-ico { width: 18px; height: 18px; margin-right: 5px; }
.winctl { margin-left: auto; display: flex; gap: 44px; padding-right: 25px; }
.winctl svg { width: 14px; height: 14px; }
.menubar {
  height: 25px; flex: none; background: #fff; display: flex; align-items: center;
  font-family: "Open Sans", sans-serif; font-size: 14.400px; letter-spacing: 0; color: #4c4c4c; padding: 0 0 0 7px; gap: 13.800px;
  border-bottom: 1px solid #e8e8e8;
}

.toolbar {
  height: 38px; flex: none; background: #151515; display: flex; align-items: center; padding: 0 12px 0 10px;
  position: relative;
}
.tb-left, .tb-right { display: flex; gap: 5px; align-items: center; }
.tbtn { height: 24px; background: #282828; border-radius: 3px; display: flex; align-items: center; justify-content: center; flex: none; color: #9a9a9a; font-size: 15px; }
.acct { width: 72px; gap: 10px; justify-content: flex-start; padding-left: 8px; }
.cloud { width: 38px; }
.collab { width: 38px; background: #1f1f1f; }
.tb-play { display: flex; gap: 1px; margin-left: 732px; height: 24px; }
.pbtn { width: 39px; background: #2a2a2a; display: flex; align-items: center; justify-content: center; }
.pbtn:first-child { border-radius: 3px 0 0 3px; }
.pbtn:last-child { border-radius: 0 3px 3px 0; }
.pbtn.on { background: #1f4568; }
.tb-right { margin-left: auto; gap: 6px; }
.sq { width: 38px; }
.dd { width: 98px; justify-content: space-between; padding: 0 4px; }

/* dock */
.dock { height: 911px; flex: none; display: flex; background: #111; gap: 2px; }
.tabbar { height: 24px; flex: none; background: #1e1e1e; display: flex; align-items: stretch; }
.tab { display: flex; align-items: center; background: #2a2a2a; border-radius: 3px 3px 0 0; gap: 6px; flex: none; }
.tab.plain { background: transparent; }
.tab-end { margin-left: auto; display: flex; align-items: center; gap: 12px; padding-right: 14px; }
.ic-lock { width: 12px; height: 16px; }
.ic-keb { width: 6px; height: 16px; }

.hierarchy { width: 260px; flex: none; display: flex; flex-direction: column; background: #282828; overflow: hidden; }
.hier-tab { width: 119px; padding-left: 9px; }
.hier-tools { height: 25px; flex: none; display: flex; align-items: center; background: #2a2a2a; position: relative; border-bottom: 1px solid #1a1a1a; padding-left: 6px; }
.plus { font-size: 28px; line-height: 22px; font-weight: 300; color: #a8a8a8; width: 22px; }
.tri-d.small { border-left-width: 4px; border-right-width: 4px; border-top-width: 5px; margin-left: 2px; }
.search { margin-left: 11px; width: 205px; height: 20px; background: #1f1f1f; border-radius: 4px; display: flex; align-items: center; padding-left: 6px; gap: 8px; color: #666; overflow: hidden; font-size: 14px; }
.search-end { margin-left: auto; width: 22px; height: 20px; background: #353535; display: flex; align-items: center; justify-content: center; }
.hrow { height: 20px; flex: none; display: flex; align-items: center; white-space: nowrap; position: relative; background: linear-gradient(90deg, #232323 40px, #282828 40px); font-size: 15px; }
.hrow.band { background: #3a3a3a; }
.hrow.sel { background: #383838; }
.hrow-fill { flex: 1; background: linear-gradient(90deg, #232323 40px, #282828 40px); }
.l0 { padding-left: 42px; } .l1 { padding-left: 59px; } .l2 { padding-left: 77px; } .l3 { padding-left: 95px; }
.tw { width: 12px; opacity: .55; }
.tri-d.tw { width: 10px; margin: 0 1px; }
.tri-r.tw { width: 6px; margin: 0 3px; opacity: 1; }
.cube { width: 18px; height: 18px; margin: 0 4px; flex: none; }
.strong { font-weight: 600; color: #b0b0b0; }
.tight { margin-left: -1px; }
.hrow .end { position: absolute; left: 242px; top: 2px; }

.center { flex: 1; min-width: 0; display: flex; flex-direction: column; gap: 2px; }
.game { height: 606px; flex: none; display: flex; flex-direction: column; background: #292929; }
.game-tab { width: 93px; padding-left: 8px; gap: 4px; }
.scene-tab { padding-left: 10px; gap: 6px; }
.game-end { padding-right: 15px; }
.game-tools { height: 25px; flex: none; display: flex; background: #303030; box-shadow: 0 2px 6px rgba(0,0,0,.45); position: relative; z-index: 1; }
.gt { display: flex; align-items: center; justify-content: space-between; border-right: 1px solid #1f1f1f; padding: 2px 5px 0; white-space: nowrap; flex: none; }
.w-game { width: 114px; }
.w-disp { width: 106px; padding-left: 11px; }
.w-asp { width: 201px; }
.w-scale { width: 460px; justify-content: flex-start; padding-left: 8px; gap: 9px; }
.slider { width: 186px; height: 3px; background: #4a4a4a; position: relative; }
.slider b { position: absolute; left: 0; top: -6px; width: 12px; height: 15px; border-radius: 6px; background: #8a8a8a; }
.onex { margin-left: -2px; }
.w-focus { width: 137px; }
.w-ico { width: 33px; justify-content: center; padding: 0; }
.w-stats { width: 49px; padding-left: 5px; }
.w-giz { width: 90px; border-right: 0; padding-right: 7px; padding-left: 4px; }
.w-giz u, .w-stack u { width: 1px; height: 16px; background: #555; margin-left: auto; margin-right: 7px; }
.viewport { flex: 1; display: flex; justify-content: center; padding: 57px 217px 0 215px; overflow: hidden; }
.canvas { width: 790px; height: 420px; flex: none; background: #686377; display: flex; flex-direction: column; align-items: center; padding-top: 129px; gap: 54px; }
.uibtn { width: 444px; height: 68px; flex: none; border-radius: 30px; display: flex; align-items: center; justify-content: center; color: #fff; font-family: Roboto, sans-serif; font-size: 49px; letter-spacing: 0; padding-top: 1px; }
.blue { background: linear-gradient(110deg, #62a0e8, #8bd8dc); }
.pink { background: linear-gradient(110deg, #d65ae6, #f77a7c); font-size: 44.200px; }

.project { flex: 1; min-height: 0; display: flex; flex-direction: column; background: #282828; overflow: hidden; }
.tabbar.low { height: 24px; padding-left: 0; }
.con-tab { width: 111px; justify-content: flex-end; padding-right: 23px; }
.proj-tab { width: 90px; padding-left: 11px; gap: 5px; }
.proj-tools { height: 25px; flex: none; background: #2f2f2f; border-bottom: 1px solid #1a1a1a; }
.tree { flex: 1; overflow: hidden; }
.trow { height: 20px; display: flex; align-items: center; gap: 6px; white-space: nowrap; }
.trow.peek { height: 8px; align-items: flex-end; overflow: hidden; line-height: 18px; }
.t0 { padding-left: 61px; }
.t1 { padding-left: 77px; }
.t2 { padding-left: 75px; }
.picked { background: #3a3a3a; }

/* inspector */
.inspector { width: 434px; flex: none; display: flex; flex-direction: column; background: #2a2a2a; position: relative; }
.occ-tab { width: 125px; padding-left: 11px; gap: 4px; }
.insp-tab { width: 117px; padding-left: 10px; gap: 4px; }
.insp-main { height: 659px; flex: none; display: flex; overflow: hidden; }
.insp-scroll { flex: 1; min-width: 0; overflow: hidden; background: #2c2c2c; }
.vscroll { width: 15px; flex: none; background: #1f1f1f; position: relative; }
.vscroll .tri-u { position: absolute; left: 2px; top: 7px; }
.vscroll .thumb { position: absolute; left: 1px; top: 146px; width: 12px; height: 304px; border-radius: 6px; background: #474747; }
.vscroll .tri-d { position: absolute; left: 2px; top: 645px; }
.peek-row { height: 3px; display: flex; gap: 19px; padding-left: 185px; }
.peek-row b { width: 63px; height: 3px; background: #1f1f1f; }
.row { height: 25px; flex: none; display: flex; align-items: center; padding-left: 23px; position: relative; }
.row label { width: 151px; flex: none; white-space: nowrap; overflow: hidden; }
.row label.shortlab { width: 149px; margin-right: 2px; }
.row label.ind1 { padding-left: 3px; }
.row label.ind2 { padding-left: 22px; width: 155px; }
.row label.ind3 { padding-left: 16px; }
.foldout { position: absolute; left: 8px; top: 8px; }
.m3 { margin-top: 3px; } .m5 { margin-top: 5px; }
.m10 { margin-top: 10px; } .m11 { margin-top: 11px; }
.vec { display: flex; }
.vec.two .axis { width: 82px; }
.vec.two { margin-left: -3px; }
.vec.two .axis b { width: 63px; flex: none; }
.vec.two .axis span { width: 14px; }
.vec.three { margin-left: 1px; }
.vec.three .axis { width: 81px; }
.vec.three .axis span { width: 18px; }
.vec.three .axis b { width: 57px; flex: none; }
.axis { display: flex; align-items: center; }
.axis span { flex: none; color: #8a8a8a; }
.axis b { height: 23px; background: #232323; border: 1px solid #151515; border-radius: 3px; padding-left: 3px; line-height: 22px; }
.link { position: absolute; left: 148px; top: 6px; width: 16px; height: 14px; }
.chead { height: 27px; flex: none; background: #323232; border-top: 1px solid #191919; display: flex; align-items: center; padding-left: 8px; position: relative; }
.tri-d.dim { border-top-color: #5f5f5f; }
.chico { width: 20px; height: 16px; margin-left: 7px; flex: none; }
.ctitle { font-weight: 700; color: #a8a8a8; margin-left: 6px; }
.ctitle.nocheck { margin-left: 30px; }
.cb { width: 17px; height: 18px; flex: none; background: #232323; border: 1px solid #171717; border-radius: 3px; display: flex; align-items: center; justify-content: center; }
.cb svg { width: 12px; height: 12px; }
.cb.hd { margin-left: 5px; }
.cb.shifted { margin-left: 0; }
.cacts { position: absolute; left: 344px; top: 6px; display: flex; align-items: center; gap: 12px; }
.cacts svg { width: 14px; height: 14px; }
.cacts svg.k { width: 6px; height: 16px; margin-left: 4px; }
.objf { width: 239px; height: 23px; background: #1f1f1f; border: 1px solid #171717; border-radius: 3px; display: flex; align-items: center; padding-left: 3px; overflow: hidden; gap: 2px; white-space: nowrap; }
.objf span { flex: 1; min-width: 0; overflow: hidden; letter-spacing: .05px; }
.objf b { width: 23px; height: 21px; flex: none; background: #2c2c2c; display: flex; align-items: center; justify-content: center; }
.objf b svg { width: 14px; height: 14px; }
.sprite { width: 14px; height: 14px; flex: none; margin-left: 1px; }
.colf { width: 239px; height: 23px; background: #1f1f1f; border: 1px solid #191919; border-radius: 3px; display: flex; overflow: hidden; }
.colf em { flex: 1; }
.colf b { width: 23px; flex: none; background: #2c2c2c; display: flex; align-items: center; justify-content: center; }
.colf b svg { width: 14px; height: 14px; }
.c-white { background: #fff; }
.c-hi { background: linear-gradient(#f5f5f5 82%, #fff 82%); }
.c-pr { background: linear-gradient(#c8c8c8 82%, #fff 82%); }
.ddf { width: 237px; height: 22px; margin-left: 1px; background: #424242; border-radius: 3px; display: flex; align-items: center; justify-content: space-between; padding: 0 8px 0 4px; letter-spacing: .3px; }
.ddf.narrow { width: 230px; margin-left: 3px; padding-left: 5px; }
.numf { width: 230px; height: 23px; background: #1f1f1f; border: 1px solid #171717; border-radius: 3px; padding-left: 1px; line-height: 22px; }
.prev-head { height: 27px; flex: none; background: #333; display: flex; align-items: center; font-weight: 700; padding-left: 8px; gap: 3px; border-bottom: 1px solid #1a1a1a; }
.prev-name { color: #a8a8a8; flex: none; }
.prev-head .tri-d { margin-top: -3px; }
.grip { flex: 1; height: 5px; border-top: 1px solid #4a4a4a; border-bottom: 1px solid #4a4a4a; margin: 0 0 0 12px; }
.prev-keb { width: 21px; height: 26px; display: flex; align-items: center; justify-content: center; border-left: 1px solid #222; }
.prev-body { height: 193px; flex: none; background: #282828; display: flex; justify-content: center; padding-top: 1px; }
.checker { width: 192px; height: 192px; position: relative; background: conic-gradient(#4a4a4a 25%, #3d3d3d 0 50%, #4a4a4a 0 75%, #3d3d3d 0) 0 0 / 32px 32px; }
.sprite-img { position: absolute; inset: 0; border-radius: 62px; background: linear-gradient(135deg, #5f9ce8, #94dfdc); }
.g { position: absolute; display: block; }
.gv { width: 1px; top: 0; bottom: 0; background: linear-gradient(#e8f4f8 24.500%, transparent 24.500% 76%, #e8f4f8 76%), repeating-linear-gradient(#2d5575 0 9px, #d8eef5 9px 11px); }
.gh { height: 1px; left: 0; right: 0; background: linear-gradient(90deg, #e8f4f8 24%, transparent 24% 76%, #e8f4f8 76%), repeating-linear-gradient(90deg, #2d5575 0 9px, #d8eef5 9px 11px); }
.g1 { left: 45px; } .g2 { left: 145px; } .g3 { top: 47px; } .g4 { top: 147px; }
.prev-cap { position: absolute; left: -20px; right: -20px; top: 150px; text-align: center; font-size: 15.500px; line-height: 18px; color: #e8e8e8; font-weight: 500; text-shadow: 1px 1px 0 #222, -1px 0 1px #222, 0 1px 2px #222; white-space: nowrap; }
.prev-foot { height: 8px; flex: none; background: #3c3c3c; }

.status { height: 27px; flex: none; background: #141414; display: flex; justify-content: flex-end; align-items: center; gap: 15px; padding-right: 9px; }
.status svg { width: 18px; height: 18px; }

/* taskbar */
.taskbar { height: 50px; flex: none; display: flex; background: linear-gradient(90deg, #262626 1400px, #1c2a33 1560px, #1f2e37); }
.tb-blank { width: 334px; flex: none; }
.tb-search { width: 156px; flex: none; background: #f3f3f3; border-left: 1px solid #bbb; }
.tk { width: 62px; flex: none; position: relative; display: flex; align-items: center; justify-content: center; padding-bottom: 2px; }
.tk svg { width: 25px; height: 25px; }
.tk.on::after { content: ""; position: absolute; left: 6px; right: 5px; bottom: 0; height: 3px; background: #76b9ed; }
.tk.act { background: #4d4d4d; }
.tk.act::after { left: 0; right: 0; }
.tray { margin-left: auto; display: flex; align-items: center; color: #eee; position: relative; width: 415px; height: 50px; font-family: "Open Sans", sans-serif; letter-spacing: 0; }
.weather { width: 30px; height: 26px; margin-left: 1px; flex: none; }
.temp { font-size: 17px; margin-left: 9px; width: 56px; }
.tray-ico { width: 16px; height: 18px; margin-right: 13px; flex: none; }
.tray-ico.chev { width: 16px; height: 10px; margin-left: 4px; margin-right: 13px; }
.tray-ico.wide { width: 20px; height: 18px; margin-right: 9px; }
.lang { font-size: 14px; margin-left: 4px; width: 38px; }
.clock { width: 80px; text-align: center; font-size: 14px; line-height: 24px; margin-left: 5px; }
.notif { width: 20px; height: 20px; margin-left: 22px; flex: none; }
.show-desk { position: absolute; right: 4px; top: 0; width: 1px; height: 50px; background: #555; }

/* profiler */
.profiler { position: absolute; left: 434px; top: 547px; width: 1103px; height: 483px; display: flex; flex-direction: column; background: #2a2a2a; border-left: 1px solid #111; border-right: 1px solid #111; overflow: hidden; }
.p-tabs { height: 26px; flex: none; background: #1e1e1e; display: flex; padding-top: 3px; border-bottom: 1px solid #141414; }
.p-tab { width: 102px; background: #333; border-top: 2px solid #1f4a72; display: flex; align-items: center; padding-left: 6px; gap: 5px; }
.p-ctl { margin-left: auto; display: flex; align-items: center; gap: 7px; padding-right: 6px; margin-top: -4px; }
.pk { margin-right: 4px; }
.ctl { width: 14px; height: 14px; }
.p-tools { height: 25px; flex: none; background: #333; display: flex; border-bottom: 1px solid #191919; }
.pt { display: flex; align-items: center; justify-content: space-between; border-right: 1px solid #222; padding: 1px 6px 0 5px; flex: none; white-space: nowrap; }
.w-mod { width: 224px; padding-right: 7px; padding-left: 4px; }
.w-mode { width: 101px; padding-right: 6px; }
.w-sq { width: 32.600px; justify-content: center; padding: 0; }
.lit { background: #454545; }
.frame { width: 177.600px; flex: none; padding: 1px 0 0 4px; line-height: 24px; white-space: nowrap; border-right: 1px solid #222; }
.w-clear { width: 50px; justify-content: center; padding: 0; }
.w-cop { width: 109px; justify-content: center; padding: 0; }
.w-deep { width: 102px; justify-content: center; padding: 0; }
.w-stack { width: 114.500px; padding-right: 5px; }
.p-tools .pt:last-child { border-right: 0; width: 30px; }
.p-body { height: 225px; flex: none; display: flex; }
.p-main { flex: 1; min-width: 0; display: flex; flex-direction: column; }
.mod { display: flex; }
.mod-left { width: 225px; flex: none; background: #393939; border-right: 1px solid #222; }
.mod-chart { flex: 1; min-width: 0; }
.mod-top { height: 28px; flex: none; border-bottom: 2px solid #1e1e1e; }
.mod-top .mod-chart { background: #242424; }
.mod-top .mod-left { background: #333; }
.mod-audio { height: 162px; flex: none; }
.mod-audio .mod-chart { background: #2b2b2b; }
.mod-video { height: 35px; flex: none; }
.mod-video .mod-chart { background: #222; }
.plot { width: 100%; height: 100%; display: block; }
.mod-title { height: 32px; display: flex; align-items: center; gap: 9px; padding-left: 8px; font-size: 17px; }
.mod-video .mod-title { height: 31px; }
.legend { height: 20px; display: flex; align-items: center; padding-left: 6px; gap: 6px; white-space: nowrap; }
.sw { width: 8px; height: 8px; border: 1px solid #222; flex: none; }
.s1 { background: #7d9a12; } .s2 { background: #2c7fa8; } .s3 { background: #c26a10; } .s4 { background: #4aa3b0; }
.p-scroll { width: 19px; flex: none; background: #1e1e1e; position: relative; }
.p-scroll .tri-u { position: absolute; left: 6px; top: 8px; }
.p-scroll .thumb { position: absolute; left: 5px; top: 57px; width: 13px; height: 37px; border-radius: 6px; background: #4a4a4a; }
.p-scroll .tri-d { position: absolute; left: 6px; top: 210px; }
.p-simple { height: 26px; flex: none; background: #333; border-top: 2px solid #454545; border-bottom: 1px solid #1c1c1c; display: flex; margin-top: -1px; }
.w-simple { width: 89px; padding-left: 4px; padding-right: 6px; }
.p-stats { flex: 1; background: #2a2a2a; padding: 5px 0 0 7px; line-height: 18.100px; overflow: hidden; white-space: nowrap; font-size: 14.800px; }

.activate { position: absolute; left: 1554px; top: 924px; color: rgba(200,200,200,.38); font-family: "Open Sans", sans-serif; white-space: nowrap; letter-spacing: 0; }
.a1 { font-size: 25.500px; line-height: 32px; }
.a2 { font-size: 17.300px; line-height: 28px; }

/* context menu */
.ctxmenu { position: absolute; left: 1px; top: 355px; width: 333px; height: 724px; background: #2b2b2b; border: 1px solid #a5a5a5; box-shadow: 2px 2px 4px rgba(0,0,0,.4); padding-top: 10px; font-family: "Open Sans", sans-serif; font-size: 14px; letter-spacing: 0; color: #f0f0f0; }
.ctxmenu a { display: flex; align-items: center; justify-content: space-between; height: 40px; padding: 0 10px 0 42px; }
.ctxmenu a svg { width: 10px; height: 18px; }
.ctxmenu hr { border: 0; height: 1px; background: #8a8a8a; margin: 5px 12px 5px; }
```
